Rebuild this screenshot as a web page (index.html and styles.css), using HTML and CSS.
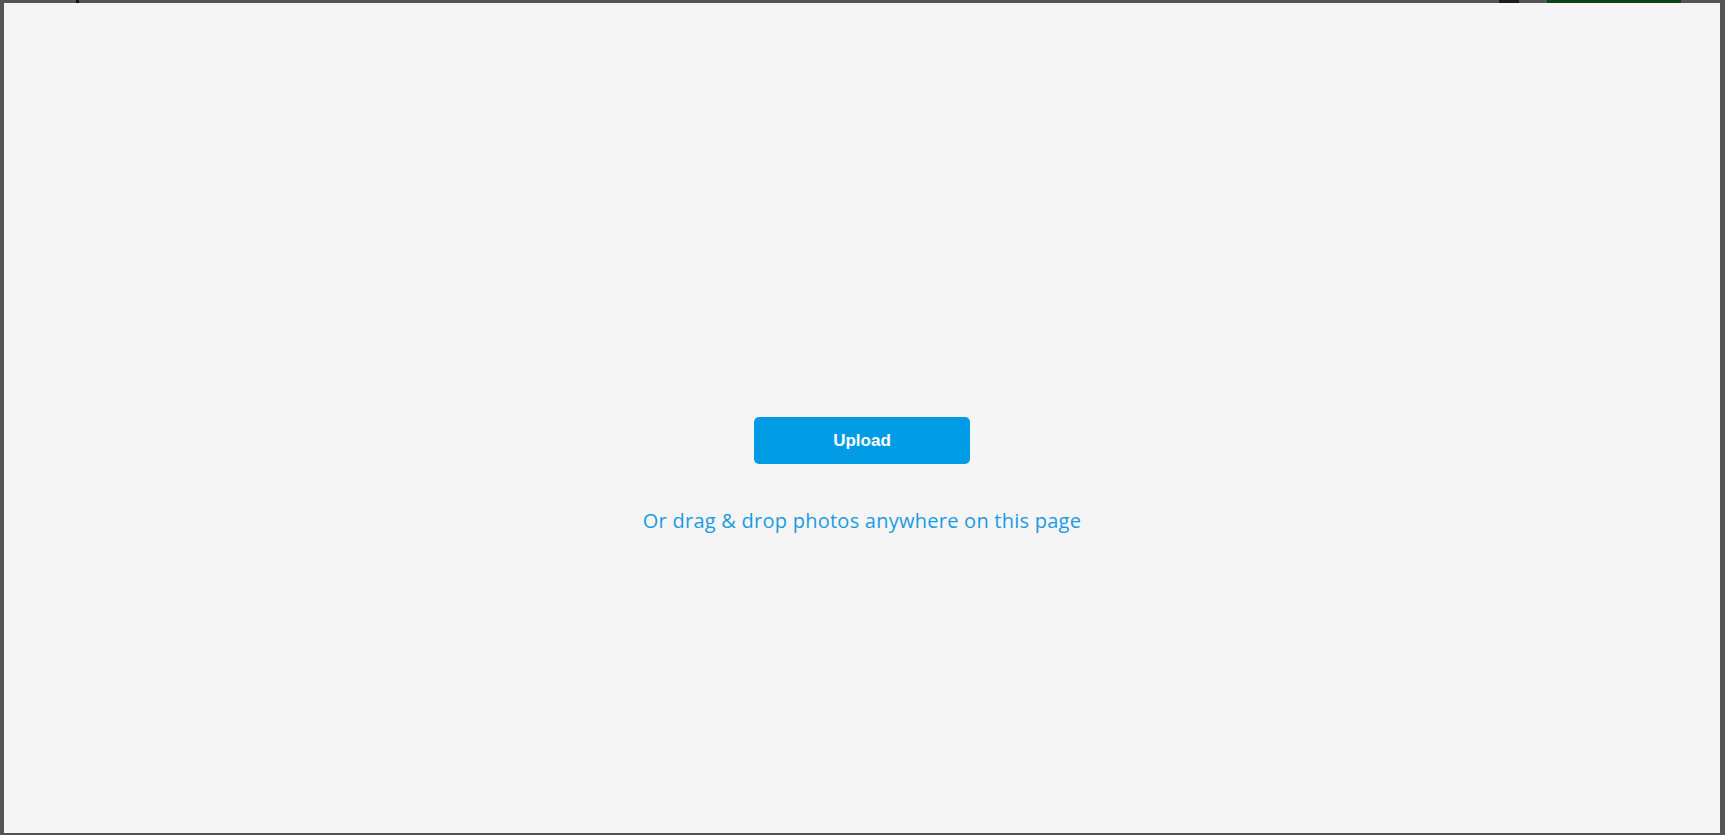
FILE: index.html
```html
<!DOCTYPE html>
<html lang="en">
<head>
<meta charset="utf-8">
<title>Upload</title>
<link rel="stylesheet" href="styles.css">
</head>
<body>
<div class="backdrop">
  <div class="top-strip">
    <span class="mark mark-a"></span>
    <span class="mark mark-b"></span>
    <span class="green-bar"></span>
  </div>
</div>
<div class="overlay">
  <div class="drop-panel">
    <button class="upload-btn" type="button">Upload</button>
    <p class="drop-hint">Or drag &amp; drop photos anywhere on this page</p>
  </div>
</div>
</body>
</html>
```
FILE: styles.css
```css
* { box-sizing: border-box; }
html, body {
  margin: 0;
  padding: 0;
  width: 100%;
  height: 100%;
  overflow: hidden;
}
body {
  background: #555555;
  font-family: "Liberation Sans", Arial, sans-serif;
}
.backdrop {
  height: 100%;
}
.top-strip {
  display: flex;
  align-items: flex-start;
  height: 3px;
  padding-left: 76px;
}
.mark {
  display: block;
  height: 3px;
  background: #111;
}
.mark-a { width: 3px; }
.mark-b { width: 20px; margin-left: 1420px; background: #1c1c1c; }
.green-bar {
  display: block;
  width: 134px;
  height: 3px;
  margin-left: 28px;
  background: #0d4317;
}
.overlay {
  position: fixed;
  top: 3px;
  left: 4px;
  right: 5px;
  bottom: 2px;
  background: #f5f5f5;
}
.drop-panel {
  display: flex;
  flex-direction: column;
  align-items: center;
  padding-top: 414px;
}
.upload-btn {
  width: 216px;
  height: 47px;
  border: 0;
  border-radius: 5px;
  background: #009be5;
  color: #ffffff;
  font-family: "Liberation Sans", Arial, sans-serif;
  font-weight: bold;
  font-size: 17px;
  padding: 0;
  cursor: pointer;
}
.drop-hint {
  margin: 45px 0 0;
  font-family: "Open Sans", "Liberation Sans", sans-serif;
  font-size: 20px;
  line-height: 24px;
  color: #1a9be3;
  letter-spacing: 0.25px;
}
```
